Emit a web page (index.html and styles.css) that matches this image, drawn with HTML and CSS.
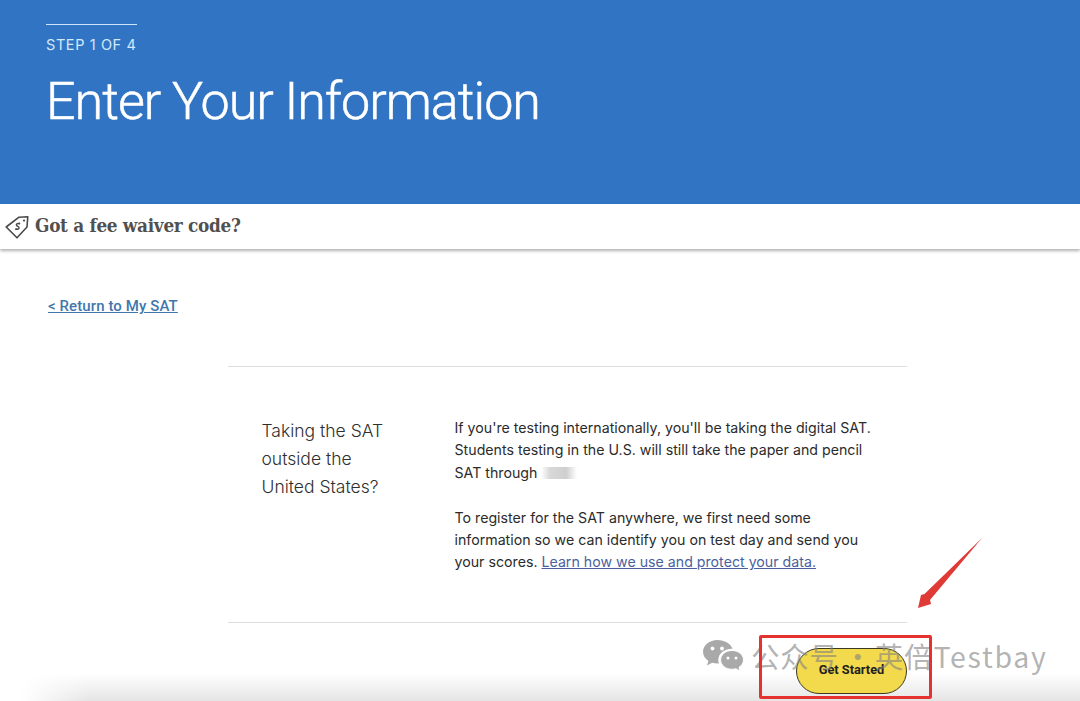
FILE: index.html
```html
<!DOCTYPE html>
<html lang="en">
<head>
<meta charset="utf-8">
<title>Enter Your Information</title>
<link rel="stylesheet" href="styles.css">
</head>
<body>
<header class="hero">
  <div class="step">STEP 1 OF 4</div>
  <h1 class="hero-title">Enter Your Information</h1>
</header>
<div class="waiver">
  <svg class="tag-icon" viewBox="0 0 24 24" width="24" height="24" fill="none" stroke="#4a4a4a" stroke-width="1.600" stroke-linejoin="round">
    <path d="M1.200 12 14 2.200 22.800 1.800 22 12 12 22.800Z"/>
    <circle cx="19" cy="5.600" r="1.100" fill="#4a4a4a" stroke="none"/>
    <path d="M14.800 9.200c-1-1-2.600-.9-3.200 0-.7 1 .2 1.700 1.200 2.100s1.600 1.300 1 2.200c-.7.900-2.200.9-3.200 0M14.900 7.800l-.9 1.100M10.300 14.800l.9-1.100" stroke-width="1.400"/>
  </svg>
  <span class="waiver-text">Got a fee waiver code?</span>
</div>
<main class="content">
  <a class="back-link" href="#">&lt; Return to My SAT</a>
  <section class="intro">
    <h2 class="intro-title">Taking the SAT outside the United States?</h2>
    <div class="intro-body">
      <p class="para">If you're testing internationally, you'll be taking the digital SAT. Students testing in the U.S. will still take the paper and pencil SAT through <span class="redacted"></span></p>
      <p class="para">To register for the SAT anywhere, we first need some information so we can identify you on test day and send you your scores. <a class="data-link" href="#">Learn how we use and protect your data.</a></p>
    </div>
  </section>
  <div class="actions">
    <button class="start" type="button">Get Started</button>
  </div>
</main>
<div class="footer-shadow"></div>
<div class="watermark">
  <svg class="wechat" viewBox="0 0 42 34" width="42" height="34" fill="#a9a9a9">
    <path d="M15.500 1C7.500 1 1 6.300 1 12.800c0 3.700 2.100 7 5.400 9.200L5 26.600l5.200-2.800c1.600.5 3.400.8 5.300.8l1.400-.1c-.4-1.200-.6-2.400-.6-3.600 0-6.200 5.900-11.200 13.300-11.200l1 .1C28.700 4.600 22.700 1 15.500 1Z"/>
    <path d="M30 11.500c-6.300 0-11.400 4.200-11.400 9.400s5.100 9.400 11.400 9.400c1.400 0 2.700-.2 3.900-.6l4.200 2.500-1.100-3.900c2.800-1.700 4.500-4.400 4.500-7.400 0-5.200-5.100-9.400-11.500-9.400Z" stroke="#fff" stroke-width="1"/>
    <circle cx="10.500" cy="9.500" r="1.900" fill="#fff"/><circle cx="20" cy="9.500" r="1.900" fill="#fff"/>
    <circle cx="26" cy="19" r="1.500" fill="#fff"/><circle cx="34" cy="19" r="1.500" fill="#fff"/>
  </svg>
  <span class="wm-text">公众号<span class="wm-sep"> · </span>英倍<span class="wm-latin">Testbay</span></span>
</div>
<div class="red-box"></div>
<svg class="arrow" viewBox="0 0 70 80" width="70" height="80">
  <path d="M64 0 12 62 13 66 0 70 3 57 6.500 56Z" fill="#e03a37"/>
</svg>
</body>
</html>
```
FILE: styles.css
```css
html { overflow: hidden; }
html, body { margin: 0; padding: 0; }
body {
  width: 1080px;
  height: 701px;
  overflow: hidden;
  position: relative;
  background: #fff;
  font-family: Inter, "Liberation Sans", sans-serif;
  color: #2b2b2b;
}
.hero {
  height: 204px;
  box-sizing: border-box;
  background: #3174c4;
  padding: 24px 0 0 46px;
}
.step {
  width: 91px;
  border-top: 1px solid #cfe6fa;
  padding-top: 11px;
  font: 400 14.500px/18px Inter, sans-serif;
  letter-spacing: 0.6px;
  color: #d3e9fb;
}
.hero-title {
  margin: 16px 0 0;
  font: 300 52px/64px Roboto, sans-serif;
  letter-spacing: -1px;
  color: #fff;
  -webkit-text-stroke: 0.5px #fff;
}
.waiver {
  height: 45px;
  display: flex;
  align-items: center;
  gap: 6px;
  padding-left: 5px;
  background: #fff;
  box-shadow: 0 2px 3px rgba(0, 0, 0, 0.3);
  position: relative;
}
.waiver-text {
  font: 700 18.800px/24px "DejaVu Serif Condensed", "DejaVu Serif", serif;
  font-stretch: condensed;
  letter-spacing: -0.3px;
  color: #505050;
  padding-bottom: 3px;
}
.content { padding: 47px 0 0 48px; }
.back-link {
  display: block;
  font: 500 15px/20px Roboto, sans-serif;
  letter-spacing: 0.1px;
  color: #3f77ad;
  width: max-content;
}
.intro {
  margin: 50px 0 0 180px;
  width: 679px;
  height: 257px;
  box-sizing: border-box;
  border-top: 1px solid #dedede;
  border-bottom: 1px solid #dedede;
  padding: 50px 36px 0 33.500px;
  display: flex;
}
.intro-title {
  margin: 0;
  width: 193px;
  padding-right: 60px;
  box-sizing: border-box;
  flex: none;
  font: 300 17.500px/28px Inter, sans-serif;
  color: #2f2f2f;
}
.intro-body { flex: 1; }
.para {
  margin: 0 0 23px;
  font: 400 14.200px/22.300px Inter, sans-serif;
  color: #2b2b2b;
}
.redacted {
  display: inline-block;
  width: 36px;
  height: 12px;
  vertical-align: -1px;
  background: linear-gradient(90deg, #fff 0, #d8d8d8 25%, #cfcfcf 70%, #fff 100%);
}
.data-link { color: #4a5f9e; }
.actions {
  display: flex;
  justify-content: flex-end;
  width: 859px;
  padding-top: 25px;
  position: relative;
  z-index: 2;
}
.start {
  width: 111px;
  height: 46px;
  border: 1px solid #3b3a20;
  border-radius: 23px;
  background: #f3d94c;
  font: 700 12.800px/16px Roboto, sans-serif;
  color: #1e1e1e;
  padding: 0 0 3px;
}
.footer-shadow {
  position: absolute;
  left: 0;
  right: 0;
  bottom: 0;
  height: 28px;
  background: linear-gradient(180deg, rgba(0, 0, 0, 0), rgba(0, 0, 0, 0.1));
  -webkit-mask-image: linear-gradient(90deg, transparent 20px, #000 90px);
  mask-image: linear-gradient(90deg, transparent 20px, #000 90px);
}
.watermark {
  position: absolute;
  left: 702px;
  top: 638px;
  display: flex;
  align-items: center;
  gap: 7px;
  z-index: 3;
}
.wm-text {
  font: 400 28.500px/36px "Noto Sans CJK SC", Inter, sans-serif;
  letter-spacing: 0.8px;
  color: rgba(130, 130, 130, 0.62);
  white-space: nowrap;
}
.wm-sep { letter-spacing: -1.800px; }
.wm-latin { letter-spacing: 1.700px; }
.red-box {
  position: absolute;
  left: 759px;
  top: 635px;
  width: 167px;
  height: 58px;
  border: 3px solid #e5322f;
  border-radius: 2px;
  z-index: 4;
}
.arrow {
  position: absolute;
  left: 918px;
  top: 538px;
  z-index: 4;
}
```
